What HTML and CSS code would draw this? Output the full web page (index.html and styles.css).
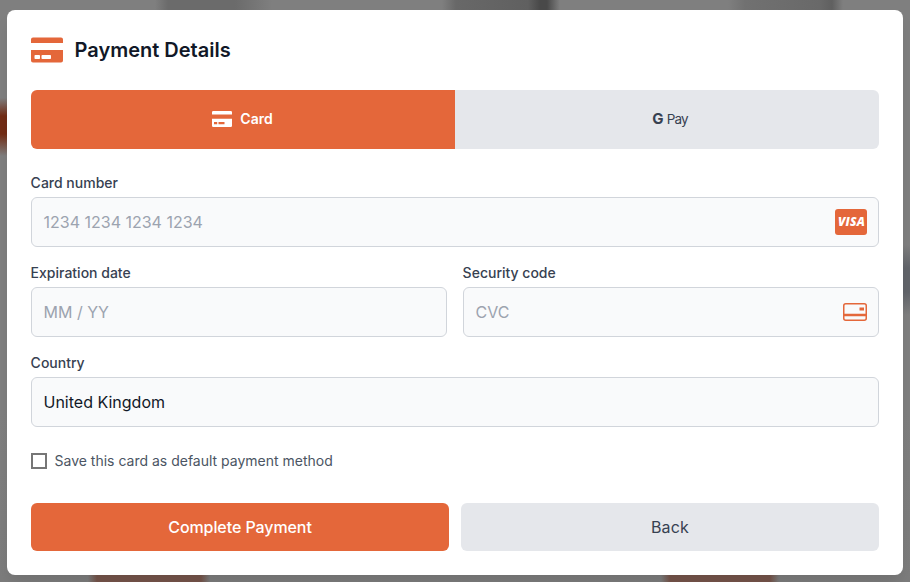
FILE: index.html
```
<!DOCTYPE html>
<html lang="en">
<head>
<meta charset="utf-8">
<title>Payment Details</title>
<link rel="stylesheet" href="styles.css">
</head>
<body>
<form class="modal">
  <header class="header">
    <svg class="header-icon" viewBox="0 0 32 32" fill="currentColor"><path d="M0 9V5.500Q0 3.500 2 3.500H30Q32 3.500 32 5.500V9ZM0 16H32V26.500Q32 28.500 30 28.500H2Q0 28.500 0 26.500ZM4.300 21Q3.500 21 3.500 21.800V24.200Q3.500 25 4.300 25H8.200Q9 25 9 24.200V21.800Q9 21 8.200 21ZM11.300 21Q10.500 21 10.500 21.800V24.200Q10.500 25 11.300 25H19.200Q20 25 20 24.200V21.800Q20 21 19.200 21Z" fill-rule="evenodd"/></svg>
    <h1>Payment Details</h1>
  </header>
  <div class="tabs">
    <button type="button" class="tab tab-active">
      <svg class="tab-icon" viewBox="0 0 20 16" fill="currentColor"><path d="M0 3.500V1.200Q0 0 1.200 0H18.800Q20 0 20 1.200V3.500ZM0 7.800H20V14.800Q20 16 18.800 16H1.200Q0 16 0 14.800ZM2 11V13.300H5.200V11ZM6.500 11V13.300H12.500V11Z" fill-rule="evenodd"/></svg>
      <span>Card</span>
    </button>
    <button type="button" class="tab"><span class="gpay"><b>G</b><span>Pay</span></span></button>
  </div>
  <div class="fields">
    <label class="field wide">Card number
      <span class="input"><span class="placeholder">1234 1234 1234 1234</span><span class="visa">VISA</span></span>
    </label>
    <label class="field">Expiration date
      <span class="input"><span class="placeholder">MM / YY</span></span>
    </label>
    <label class="field">Security code
      <span class="input"><span class="placeholder">CVC</span>
        <svg class="cvc" viewBox="0 0 24 18"><rect x=".75" y=".75" width="22.500" height="16.500" rx="2" fill="none" stroke="currentColor" stroke-width="1.500"/><path d="M1 10.800H23V13.300H1ZM16.500 4.500H21V7.500H16.500Z" fill="currentColor"/></svg>
      </span>
    </label>
    <label class="field wide">Country
      <span class="input">United Kingdom</span>
    </label>
  </div>
  <label class="save"><span class="box"></span><span class="save-text">Save this card as default payment method</span></label>
  <div class="actions">
    <button type="button" class="action primary">Complete Payment</button>
    <button type="button" class="action">Back</button>
  </div>
</form>
</body>
</html>
```
FILE: styles.css
```
* { box-sizing: border-box; }
body {
  margin: 0;
  height: 582px;
  overflow: hidden;
  padding: 10px 7px 7px;
  font-family: Inter, sans-serif;
  background:
    linear-gradient(90deg, transparent 88px, #75544a 97px 201px, transparent 210px 661px, #75544a 670px 770px, transparent 779px) 0 100% / 100% 8px no-repeat,
    linear-gradient(transparent 98px, #722c15 116px 134px, transparent 156px) 0 0 / 8px 100% no-repeat,
    linear-gradient(transparent 245px, #62656b 268px 292px, transparent 315px) 100% 0 / 8px 100% no-repeat,
    linear-gradient(90deg, transparent 155px, #6b6b6b 168px 235px, transparent 272px 442px, #686868 456px, #606060 528px, #494949 540px 547px, transparent 560px 728px, #717171 745px, #696969 820px, #606060 832px, transparent 843px) 0 0 / 100% 11px no-repeat,
    linear-gradient(#7f7f7f 70%, #7c7c7c);
}
h1 { margin: 0; font-size: 20px; line-height: 28px; font-weight: 600; color: #111827; }
button { border: 0; padding: 0; font: inherit; }
.modal { height: 565px; padding: 24px; border-radius: 8px; background: #fff; box-shadow: 0 10px 15px -3px rgba(0,0,0,.1); }
.header { display: flex; align-items: center; gap: 11.5px; height: 32px; margin-bottom: 24px; }
.header-icon { width: 32px; height: 32px; color: #e4673a; }
.tabs { display: flex; height: 59px; border-radius: 6px; overflow: hidden; margin-bottom: 24px; }
.tab { flex: none; width: 50%; display: flex; align-items: center; justify-content: center; gap: 8px; padding-bottom: 2px; background: #e5e7eb; color: #374151; font-size: 14px; font-weight: 600; }
.tab-active { padding-right: 1px; background: #e4673a; color: #fff; }
.tab-icon { width: 20px; height: 16px; }
.gpay { display: flex; align-items: baseline; gap: 4px; margin-left: 6px; font-size: 13.5px; font-weight: 400; line-height: 18px; letter-spacing: -.9px; }
.gpay b { font-size: 15px; font-weight: 700; }
.fields { display: grid; grid-template-columns: 1fr 1fr; gap: 16px; }
.field { font-size: 14px; line-height: 20px; font-weight: 500; color: #374151; text-indent: -.4px; }
.wide { grid-column: span 2; }
.input { display: flex; align-items: center; justify-content: space-between; height: 50px; margin-top: 4px; padding: 0 11px 0 11.5px; border: 1px solid #d1d5db; border-radius: 6px; background: #f9fafb; color: #111827; font-size: 16px; font-weight: 400; text-indent: 0; }
.placeholder { color: #9ca3af; }
.visa { width: 32px; height: 26px; padding-left: 1px; border-radius: 3px; background: #e4673a; color: #fff; font: italic 800 12px/26px "Open Sans", sans-serif; letter-spacing: .2px; text-align: center; }
.cvc { width: 24px; height: 18px; color: #e4673a; }
.save { display: flex; align-items: center; gap: 7.5px; height: 20px; margin: 24px 0 32px; font-size: 14px; color: #4b5563; }
.save-text { padding-bottom: 1px; }
.box { width: 16px; height: 16px; border: 2px solid #767676; background: #fff; }
.actions { display: flex; gap: 12px; }
.action { flex: 1; height: 48px; border-radius: 6px; background: #e5e7eb; color: #374151; font-size: 16px; font-weight: 400; letter-spacing: .15px; }
.primary { background: #e4673a; color: #fff; font-weight: 500; letter-spacing: -.08px; }
```
